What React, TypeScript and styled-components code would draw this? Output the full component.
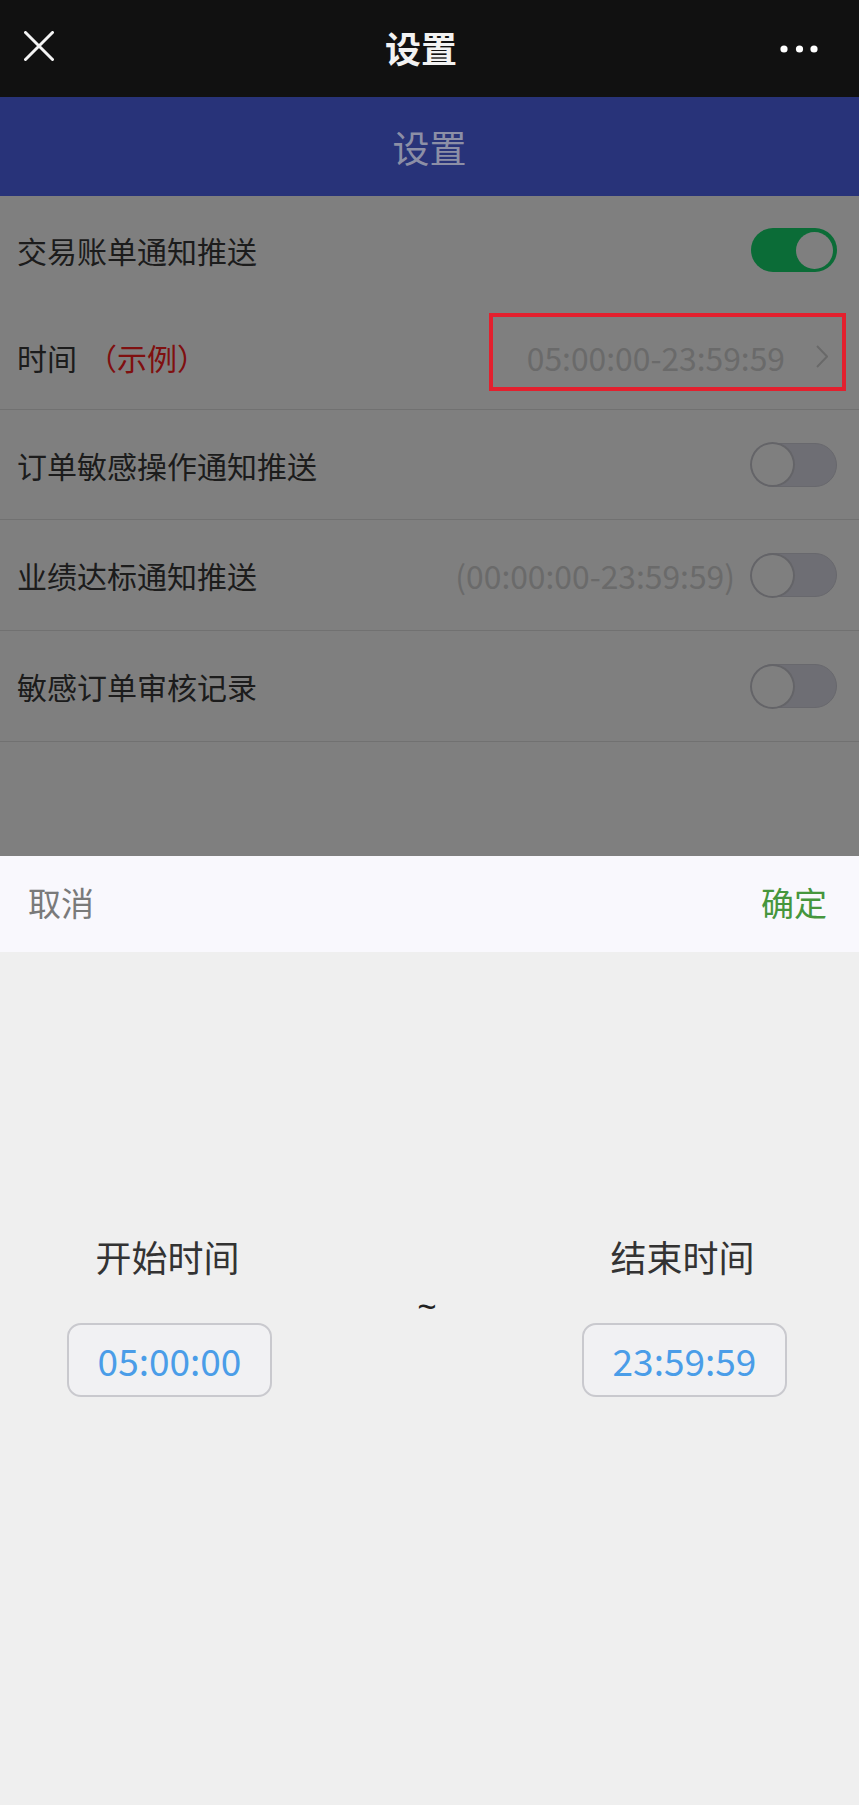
import React from 'react';
import styled, { createGlobalStyle } from 'styled-components';

const GlobalStyle = createGlobalStyle`
  html, body { margin: 0; padding: 0; }
  body {
    background: #efefef;
    font-family: "Noto Sans CJK SC", "Noto Sans", sans-serif;
  }
  * { box-sizing: border-box; }
`;

const Screen = styled.div`
  width: 859px;
  min-height: 1805px;
  display: flex;
  flex-direction: column;
  background: #efefef;
`;

const NavBar = styled.header`
  height: 97px;
  flex: none;
  background: #111111;
  color: #f2f2f2;
  display: grid;
  grid-template-columns: 1fr auto 1fr;
  align-items: center;
  padding: 0 41px 0 24px;
`;

const NavTitle = styled.h1`
  margin: -3px 0 0 0;
  font-size: 36px;
  line-height: 1;
  font-weight: 700;
`;

const NavRight = styled.div`
  display: flex;
  justify-content: flex-end;
`;

const PageHeader = styled.div`
  height: 99px;
  flex: none;
  background: #283379;
  color: #8c8fa6;
  font-size: 37px;
  display: flex;
  align-items: center;
  justify-content: center;
`;

const ListArea = styled.section`
  position: relative;
  height: 660px;
  flex: none;
  background: #ffffff;
`;

const Mask = styled.div`
  position: absolute;
  inset: 0;
  background: rgba(0, 0, 0, 0.5);
  z-index: 1;
`;

const Row = styled.div<{ $h: number; $divider?: boolean }>`
  height: ${(p) => p.$h}px;
  display: flex;
  align-items: center;
  padding: 0 22px 0 17px;
  border-bottom: ${(p) => (p.$divider ? '1px solid #e2e2e2' : 'none')};
`;

const Label = styled.span`
  font-size: 30px;
  color: #383838;
  flex: 1;
  white-space: nowrap;
`;

const Note = styled.span`
  color: #ff2020;
  margin-left: 10px;
`;

const ValueCell = styled.div`
  position: relative;
  display: flex;
  align-items: center;
  gap: 31px;
  margin-right: 9px;
  height: 42px;
`;

const ValueText = styled.span<{ $gap?: number }>`
  font-size: 31.8px;
  line-height: 42px;
  color: #d4d4d4;
  margin-right: ${(p) => p.$gap ?? 0}px;
  white-space: nowrap;
`;

const Annotation = styled.div`
  position: absolute;
  left: -38px;
  right: -18px;
  top: -23px;
  bottom: -13px;
  border: 4px solid #e3202e;
  z-index: 2;
`;

const Track = styled.div<{ $on?: boolean }>`
  width: 86px;
  height: 44px;
  border-radius: 22px;
  flex: none;
  display: flex;
  align-items: center;
  justify-content: ${(p) => (p.$on ? 'flex-end' : 'flex-start')};
  padding: ${(p) => (p.$on ? '0 4px' : '0')};
  background: ${(p) => (p.$on ? '#17d96e' : '#dcdce8')};
  border: ${(p) => (p.$on ? 'none' : '1px solid #d0d0da')};
`;

const Thumb = styled.div<{ $on?: boolean }>`
  width: ${(p) => (p.$on ? 37 : 41)}px;
  height: ${(p) => (p.$on ? 37 : 41)}px;
  border-radius: 50%;
  background: #ffffff;
  box-shadow: ${(p) => (p.$on ? 'none' : '0 0 0 2px #c8c8d0')};
`;

const Sheet = styled.section`
  flex: 1;
  display: flex;
  flex-direction: column;
`;

const SheetHeader = styled.div`
  height: 96px;
  flex: none;
  background: #f9f8fd;
  display: flex;
  align-items: center;
  justify-content: space-between;
  padding: 0 32px 0 28px;
  font-size: 33px;
`;

const SheetAction = styled.span<{ $primary?: boolean }>`
  color: ${(p) => (p.$primary ? '#46963d' : '#7a7a7a')};
  margin-top: -4px;
`;

const SheetBody = styled.div`
  flex: 1;
  background: #efefef;
  display: flex;
  justify-content: space-between;
  align-items: flex-start;
  padding: 286px 72px 0 67px;
`;

const Column = styled.div`
  width: 205px;
  display: flex;
  flex-direction: column;
  align-items: center;
  gap: 48px;
`;

const ColumnTitle = styled.div`
  font-size: 36px;
  line-height: 37px;
  color: #333333;
  margin-right: 4px;
`;

const TimeBox = styled.div`
  width: 205px;
  height: 74px;
  border: 2px solid #c9c9ce;
  border-radius: 14px;
  background: #f1f1f3;
  color: #4a9de8;
  font-size: 37px;
  display: flex;
  align-items: center;
  justify-content: center;
`;

const Tilde = styled.div`
  font-family: "Noto Sans", "DejaVu Sans", sans-serif;
  font-size: 34px;
  line-height: 34px;
  color: #222;
  margin-top: 51px;
`;

const CloseIcon = () => (
  <svg width="30" height="30" viewBox="0 0 30 30">
    <path d="M1.5 1.5 L28.5 28.5 M28.5 1.5 L1.5 28.5" stroke="#f4f4f4" strokeWidth="3" strokeLinecap="round" />
  </svg>
);

const MoreIcon = () => (
  <svg width="38" height="8" viewBox="0 0 38 8">
    <circle cx="4" cy="4" r="3.6" fill="#fff" />
    <circle cx="19.5" cy="4" r="3.6" fill="#fff" />
    <circle cx="34" cy="4" r="3.6" fill="#fff" />
  </svg>
);

const Chevron = () => (
  <svg width="12" height="23" viewBox="0 0 12 23">
    <path d="M1 1 L11 11.5 L1 22" fill="none" stroke="#d2d2d2" strokeWidth="2" />
  </svg>
);

const Switch = ({ on }: { on?: boolean }) => (
  <Track $on={on}>
    <Thumb $on={on} />
  </Track>
);

export default function App() {
  return (
    <>
      <GlobalStyle />
      <Screen>
        <NavBar>
          <div>
            <CloseIcon />
          </div>
          <NavTitle>设置</NavTitle>
          <NavRight>
            <MoreIcon />
          </NavRight>
        </NavBar>
        <PageHeader>设置</PageHeader>
        <ListArea>
          <Row $h={108}>
            <Label>交易账单通知推送</Label>
            <Switch on />
          </Row>
          <Row $h={106} $divider>
            <Label>
              时间<Note>（示例）</Note>
            </Label>
            <ValueCell>
              <ValueText>05:00:00-23:59:59</ValueText>
              <Chevron />
              <Annotation />
            </ValueCell>
          </Row>
          <Row $h={110} $divider>
            <Label>订单敏感操作通知推送</Label>
            <Switch />
          </Row>
          <Row $h={111} $divider>
            <Label>业绩达标通知推送</Label>
            <ValueText $gap={16}>(00:00:00-23:59:59)</ValueText>
            <Switch />
          </Row>
          <Row $h={111} $divider>
            <Label>敏感订单审核记录</Label>
            <Switch />
          </Row>
          <Mask />
        </ListArea>
        <Sheet>
          <SheetHeader>
            <SheetAction>取消</SheetAction>
            <SheetAction $primary>确定</SheetAction>
          </SheetHeader>
          <SheetBody>
            <Column>
              <ColumnTitle>开始时间</ColumnTitle>
              <TimeBox>05:00:00</TimeBox>
            </Column>
            <Tilde>~</Tilde>
            <Column>
              <ColumnTitle>结束时间</ColumnTitle>
              <TimeBox>23:59:59</TimeBox>
            </Column>
          </SheetBody>
        </Sheet>
      </Screen>
    </>
  );
}
